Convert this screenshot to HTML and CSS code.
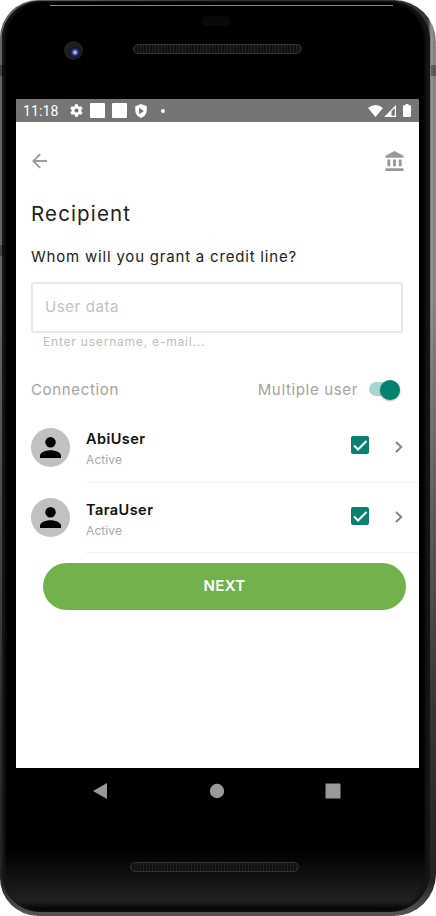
FILE: index.html
```html
<!DOCTYPE html>
<html lang="en">
<head>
<meta charset="utf-8">
<title>Recipient</title>
<link rel="stylesheet" href="styles.css">
</head>
<body>
<div class="phone">
  <div class="face">
    <header class="bezel-top">
      <span class="sensor"></span>
      <span class="camera"></span>
      <span class="speaker"></span>
      <span class="shine"></span>
    </header>
    <main class="screen">
      <div class="status">
        <span class="clock">11:18</span>
        <svg class="gear" viewBox="2 2 20 20"><path fill-rule="evenodd" d="M19.1 12.9a7 7 0 0 0 0-1.8l2-1.6c.2-.1.2-.4.1-.6l-1.9-3.300c-.1-.2-.4-.3-.6-.2l-2.400 1a7 7 0 0 0-1.600-1l-.4-2.500a.5.5 0 0 0-.5-.4h-3.800a.5.5 0 0 0-.5.4l-.4 2.500a7 7 0 0 0-1.600 1l-2.400-1c-.2-.1-.5 0-.6.2L2.700 8.900c-.1.200 0 .5.1.6l2 1.600a7 7 0 0 0 0 1.800l-2 1.600c-.1.100-.2.400-.1.600l1.900 3.300c.1.200.4.300.6.200l2.400-1a7 7 0 0 0 1.600 1l.4 2.500c0 .2.200.4.500.4h3.800c.2 0 .5-.2.500-.4l.4-2.500a7 7 0 0 0 1.600-1l2.400 1c.2.100.5 0 .6-.2l1.900-3.300c.1-.2.100-.5-.1-.6zM12 15.200a3.200 3.200 0 1 1 0-6.400 3.200 3.200 0 0 1 0 6.400z"/></svg>
        <span class="note"></span>
        <span class="note"></span>
        <svg class="shield" viewBox="3 1 18 22"><path fill-rule="evenodd" d="M12 1 3 4.500V11c0 5.500 3.800 10.200 9 12 5.200-1.800 9-6.500 9-12V4.500zM9 7l7.500 5L9 17z"/></svg>
        <span class="dot"></span>
        <svg class="wifi" viewBox="0 0 15 12"><path d="M0 3Q7.500-3 15 3L7.500 12z"/></svg>
        <svg class="signal" viewBox="0 0 12 12"><path fill-rule="evenodd" d="M12 0v12H0zM10.800 3 7.500 6.300v4.500h3.300z"/></svg>
        <svg class="battery" viewBox="0 0 8 13"><path d="M2.500 0h3v1.300H7q1 0 1 1V12q0 1-1 1H1q-1 0-1-1V2.300q0-1 1-1h1.500z"/></svg>
      </div>
      <nav class="appbar">
        <svg class="back" viewBox="4 4 16 16"><path d="M20 11H7.830l5.590-5.590L12 4l-8 8 8 8 1.410-1.410L7.830 13H20z"/></svg>
        <svg class="bank" viewBox="2 1 19 21"><path d="M4 10v7h3v-7zm6 0v7h3v-7zM2 22h19v-3H2zm14-12v7h3v-7zM11.500 1 2 6v2h19V6z"/></svg>
      </nav>
      <h1 class="title">Recipient</h1>
      <p class="question">Whom will you grant a credit line?</p>
      <div class="field">User data</div>
      <p class="helper">Enter username, e-mail...</p>
      <div class="options">
        <span class="connection">Connection</span>
        <span class="multiple">Multiple user</span>
        <span class="switch"><span class="thumb"></span></span>
      </div>
      <ul class="users">
        <li class="user">
          <span class="avatar"><svg viewBox="4 4 16 16"><circle cx="12" cy="8" r="4"/><path d="M4 20v-2c0-2.700 5.300-4 8-4s8 1.300 8 4v2z"/></svg></span>
          <div class="row">
            <div class="who"><strong class="name">AbiUser</strong><span class="state">Active</span></div>
            <span class="check"><svg viewBox="0 0 18 18"><path d="m3 9.500 4 4L15.500 5"/></svg></span>
            <svg class="chevron" viewBox="0 0 8 12"><path d="m1 1 5.200 5L1 11"/></svg>
          </div>
        </li>
        <li class="user">
          <span class="avatar"><svg viewBox="4 4 16 16"><circle cx="12" cy="8" r="4"/><path d="M4 20v-2c0-2.700 5.300-4 8-4s8 1.300 8 4v2z"/></svg></span>
          <div class="row">
            <div class="who"><strong class="name">TaraUser</strong><span class="state">Active</span></div>
            <span class="check"><svg viewBox="0 0 18 18"><path d="m3 9.500 4 4L15.500 5"/></svg></span>
            <svg class="chevron" viewBox="0 0 8 12"><path d="m1 1 5.200 5L1 11"/></svg>
          </div>
        </li>
      </ul>
      <button class="next">NEXT</button>
    </main>
    <footer class="softkeys">
      <svg viewBox="0 0 16 16"><path d="M15 0v16L1 8z"/></svg>
      <svg viewBox="0 0 16 16"><circle cx="8" cy="8" r="7.200"/></svg>
      <svg viewBox="0 0 16 16"><rect x=".5" y=".5" width="15" height="15" rx=".5"/></svg>
    </footer>
    <span class="speaker speaker-bottom"></span>
  </div>
  <span class="key key-left"></span>
  <span class="key key-left key-low"></span>
  <span class="key key-right"></span>
</div>
</body>
</html>
```
FILE: styles.css
```css
* { box-sizing: border-box; }
body { margin: 0; background: #fff; font-family: Inter, "Liberation Sans", sans-serif; }
h1, p, ul { margin: 0; padding: 0; font-weight: 400; }
svg { display: block; flex: none; }

.phone {
  position: relative;
  width: 436px;
  height: 916px;
  padding: 1px 0 2px 2px;
  overflow: hidden;
  border-radius: 38px 42px 42px 38px;
  background:
    linear-gradient(#0000 0 300px, #222c 700px, #222 880px, #555 914px),
    linear-gradient(90deg, #666 0 3px, #333 50%, #333 428px, #777 430px, #999 432px, #777 434px, #999);
}
.face {
  width: 428px;
  height: 911px;
  padding: 0 11px 0 14px;
  border-radius: 38px 40px 40px 38px;
  background: linear-gradient(#000 0 850px, #222 900px, #080808 907px);
  box-shadow: inset 3px 0 3px #191919, inset -5px 0 3px #151515;
}
.key { position: absolute; width: 5px; height: 11px; background: #0005; top: 65px; }
.key-left { left: 0; }
.key-low { top: 245px; }
.key-right { right: 0; }

.bezel-top { position: relative; height: 98px; }
.shine { position: absolute; left: 34px; right: 26px; top: 4px; height: 1px; background: #888; }
.sensor { position: absolute; left: 186px; top: 15px; width: 29px; height: 10px; border-radius: 5px; background: #08090d; }
.camera {
  position: absolute; left: 48px; top: 40px; width: 19px; height: 19px; border-radius: 50%;
  background: radial-gradient(circle at 58% 60%, #aab4ff 0 1px, #28346f 3px, #10152f 5px, #202020 7px, #1b1b1b);
}
.speaker {
  position: absolute; left: 117px; top: 43px; width: 169px; height: 10px;
  border: 1px solid #35332f; border-radius: 5px;
  background: repeating-linear-gradient(90deg, #24221d 0 1px, #11110f 1px 3px);
}
.speaker-bottom { left: 130px; top: 862px; }

.screen { width: 403px; height: 669px; background: #fff; }
.status { display: flex; align-items: center; height: 23px; padding: 0 8px 0 7px; background: #757575; }
.status svg { fill: #fff; }
.clock { width: 47px; color: #fff; font: 400 14px/24px Roboto, sans-serif; letter-spacing: .1px; }
.gear { width: 13px; height: 13px; }
.note { width: 15px; height: 15px; margin-left: 7px; border-radius: 1px; background: #fff; }
.shield { width: 12px; height: 14px; margin-left: 8px; }
.dot { width: 4px; height: 4px; margin-left: 14px; border-radius: 50%; background: #fff; }
.wifi { width: 15px; height: 12px; margin-left: auto; }
.signal { width: 12px; height: 12px; margin-left: 1px; }
.battery { width: 8px; height: 13px; margin-left: 7px; }

.appbar { display: flex; align-items: center; justify-content: space-between; height: 78px; padding: 0 15px 0 16px; fill: #999; }
.back { width: 15px; height: 16px; }
.bank { width: 19px; height: 20px; }

.title { height: 28px; padding-left: 15px; color: #222; font-size: 20.5px; line-height: 28px; letter-spacing: 1.15px; }
.question { height: 20px; margin-top: 19px; padding-left: 15px; color: #222; font-size: 15px; line-height: 20px; letter-spacing: .8px; white-space: nowrap; }
.field {
  width: 372px; height: 51px; margin: 15px 0 0 15px; padding-left: 12px;
  border: 2px solid #e7e7e7; border-radius: 3px;
  color: #c3c3c3; font-size: 15px; line-height: 45px; letter-spacing: .6px;
}
.helper { height: 18px; padding-left: 27px; color: #bdbdbd; font-size: 12px; line-height: 18px; letter-spacing: .8px; }
.options { display: flex; align-items: center; height: 24px; margin-top: 26px; padding: 0 19px 0 15px; color: #a3a3a3; font-size: 15px; letter-spacing: .66px; }
.multiple { margin-left: auto; }
.switch { position: relative; width: 31px; height: 14px; margin-left: 11px; border-radius: 7px; background: #a5d6cf; }
.thumb { position: absolute; right: 0; top: -2px; width: 20px; height: 20px; border-radius: 50%; background: #05826f; box-shadow: 0 1px 2px #0005; }

.users { margin-top: 11px; list-style: none; }
.user { display: flex; align-items: center; height: 70.5px; padding-left: 15px; }
.avatar { display: grid; place-items: center; flex: none; width: 39px; height: 39px; border-radius: 50%; background: #c1c1c1; }
.avatar svg { width: 21px; height: 21px; }
.row { display: flex; align-items: center; flex: 1; height: 100%; margin-left: 16px; padding-right: 16px; border-bottom: 1px solid #f1f1f1; }
.who { display: grid; margin: 5px auto 0 0; }
.name { color: #111; font-size: 14.5px; font-weight: 600; line-height: 21px; letter-spacing: .45px; }
.state { color: #aaa; font-size: 12px; line-height: 21px; letter-spacing: .1px; }
.check { width: 18px; height: 18px; margin-bottom: 3px; border-radius: 2px; background: #0b806e; }
.check svg { width: 18px; height: 18px; fill: none; stroke: #fff; stroke-width: 2; }
.chevron { width: 8px; height: 12px; margin-left: 26px; fill: none; stroke: #858585; stroke-width: 2; }

.next {
  display: block; width: 363px; height: 47px; margin: 10px 0 0 27px; padding: 0 0 2px;
  border: 0; border-radius: 24px; background: #72b24c;
  color: #fff; font: 600 15px/45px Inter, sans-serif; letter-spacing: .3px;
}
.softkeys { display: flex; justify-content: space-between; width: 249px; margin: 15px 0 0 76px; fill: #999; }
.softkeys svg { width: 16px; height: 16px; }
```
